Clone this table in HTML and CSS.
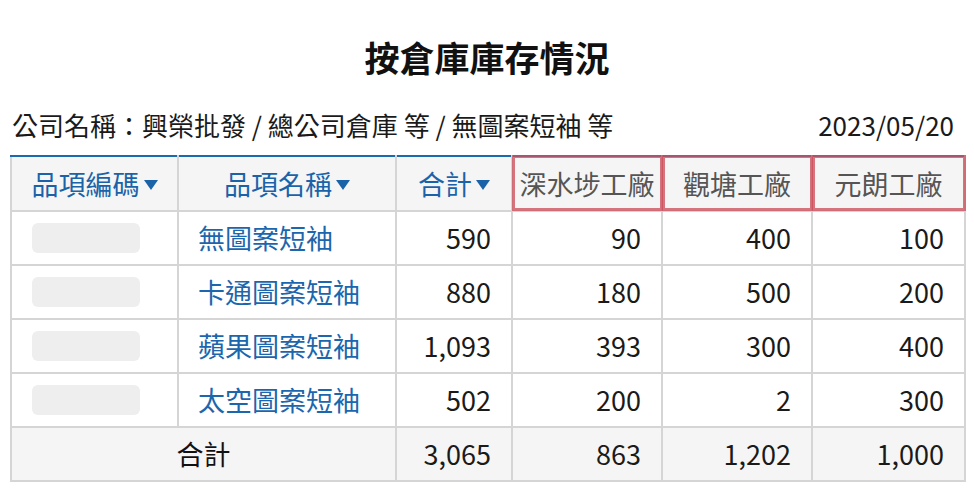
FILE: index.html
```html
<!DOCTYPE html>
<html lang="zh-Hant">
<head>
<meta charset="utf-8">
<link rel="stylesheet" href="styles.css">
</head>
<body>
<div class="page">
  <h1 class="title">按倉庫庫存情況</h1>
  <div class="meta">
    <span class="filters">公司名稱：興榮批發 / 總公司倉庫 等 / 無圖案短袖 等</span>
    <span class="date">2023/05/20</span>
  </div>
  <table class="grid">
    <colgroup>
      <col class="c1"><col class="c2"><col class="c3"><col class="c4"><col class="c5"><col class="c6">
    </colgroup>
    <thead>
      <tr>
        <th class="sort">品項編碼<span class="tri"></span></th>
        <th class="sort">品項名稱<span class="tri"></span></th>
        <th class="sort">合計<span class="tri"></span></th>
        <th class="wh">深水埗工廠</th>
        <th class="wh">觀塘工廠</th>
        <th class="wh">元朗工廠</th>
      </tr>
    </thead>
    <tbody>
      <tr><td class="code"><span class="ph"></span></td><td class="name">無圖案短袖</td><td class="num">590</td><td class="num">90</td><td class="num">400</td><td class="num">100</td></tr>
      <tr><td class="code"><span class="ph"></span></td><td class="name">卡通圖案短袖</td><td class="num">880</td><td class="num">180</td><td class="num">500</td><td class="num">200</td></tr>
      <tr><td class="code"><span class="ph"></span></td><td class="name">蘋果圖案短袖</td><td class="num">1,093</td><td class="num">393</td><td class="num">300</td><td class="num">400</td></tr>
      <tr><td class="code"><span class="ph"></span></td><td class="name">太空圖案短袖</td><td class="num">502</td><td class="num">200</td><td class="num">2</td><td class="num">300</td></tr>
    </tbody>
    <tfoot>
      <tr><td colspan="2" class="label">合計</td><td class="num">3,065</td><td class="num">863</td><td class="num">1,202</td><td class="num">1,000</td></tr>
    </tfoot>
  </table>
</div>
</body>
</html>
```
FILE: styles.css
```css
* { box-sizing: border-box; }
html, body { margin: 0; padding: 0; background: #fff; }
body {
  font-family: "Noto Sans CJK TC", "Noto Sans", sans-serif;
  color: #1a1a1a;
}
.page {
  width: 974px;
  padding: 0 10px;
}
.title {
  margin: 0;
  padding-top: 36px;
  height: 98px;
  font-size: 35px;
  line-height: 42px;
  font-weight: 700;
  text-align: center;
  color: #111;
}
.meta {
  display: flex;
  justify-content: space-between;
  align-items: center;
  height: 57px;
  padding: 0 10px 4px 2px;
  font-size: 26px;
  color: #1a1a1a;
}
.grid {
  width: 954px;
  border-collapse: collapse;
  table-layout: fixed;
  font-size: 27px;
  border-top: 2px solid #1a6aaf;
}
.c1 { width: 167px; }
.c2 { width: 218px; }
.c3 { width: 116px; }
.c4 { width: 150px; }
.c5 { width: 150px; }
.c6 { width: 153px; }
.grid th, .grid td {
  border: 2px solid #d5d5d5;
  padding: 0 20px;
  height: 54px;
  line-height: 30px;
  white-space: nowrap;
}
.grid thead th {
  border-top: 2px solid #1a6aaf;
  background: #f5f5f5;
  font-weight: 400;
  height: 55px;
  padding: 0;
  text-align: center;
  position: relative;
}
.sort { color: #1b63a9; }
.tri {
  display: inline-block;
  width: 0;
  height: 0;
  margin-left: 4px;
  vertical-align: middle;
  border-left: 7px solid transparent;
  border-right: 7px solid transparent;
  border-top: 10px solid #1b63a9;
  position: relative;
  top: -2px;
}
.wh { color: #555; }
.wh::after {
  content: "";
  position: absolute;
  left: -1px;
  right: -2px;
  top: -2px;
  bottom: -1px;
  border: 3px solid rgba(205, 80, 92, 0.78);
  pointer-events: none;
}
.code { padding-left: 22px; }
.ph {
  display: block;
  width: 108px;
  height: 30px;
  border-radius: 6px;
  background: #eeeeee;
}
.grid td.name { color: #1b66ad; text-align: left; padding-left: 19px; }
.num { text-align: right; color: #1a1a1a; }
tfoot td { background: #f5f5f5; color: #111; }
.label { text-align: center; }
```
